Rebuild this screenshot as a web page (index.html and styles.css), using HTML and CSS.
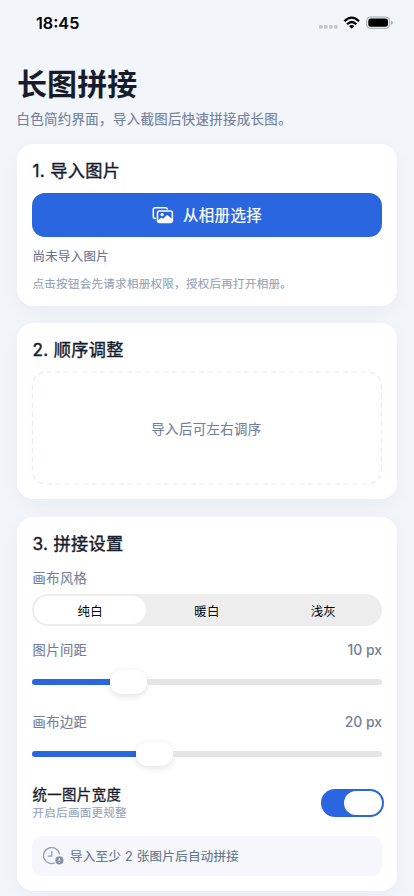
FILE: index.html
```html
<!DOCTYPE html>
<html lang="zh-CN">
<head>
<meta charset="utf-8">
<meta name="viewport" content="width=device-width, initial-scale=1">
<title>长图拼接</title>
<link rel="stylesheet" href="styles.css">
</head>
<body>
<div class="statusbar">
  <span class="time">18:45</span>
  <svg class="signals" width="76" height="16" viewBox="0 0 76 16">
    <g fill="#c2c5ca"><rect x="1" y="10" width="3.6" height="3.8" rx="1.2"/><rect x="6" y="10" width="3.6" height="3.8" rx="1.2"/><rect x="11" y="10" width="3.6" height="3.8" rx="1.2"/><rect x="16" y="10" width="3.6" height="3.8" rx="1.2"/></g>
    <g fill="none" stroke="#000" stroke-width="2.3"><path d="M26.4 6.2Q33.7 -.9 41 6.2"/><path d="M29.1 9.2Q33.7 4.7 38.3 9.2"/></g>
    <path d="M31 11.1Q33.7 8.7 36.4 11.1L33.7 13.8Z"/>
    <rect x="48.6" y="2" width="23" height="11.3" rx="3.6" fill="none" stroke="#a3a6aa"/>
    <rect x="50.3" y="3.6" width="19.7" height="8.1" rx="2.3"/>
    <path d="M73 5.7Q74.8 6.3 74.8 7.7T73 9.7Z" fill="#a3a6aa"/>
  </svg>
</div>
<main class="page">
  <h1 class="title">长图拼接</h1>
  <p class="subtitle">白色简约界面，导入截图后快速拼接成长图。</p>

  <section class="card import">
    <h2 class="heading">1. 导入图片</h2>
    <button class="pick">
      <svg width="22" height="18" viewBox="0 0 22 18">
        <path d="M4.2 12.6H3.3Q1.3 12.6 1.3 10.6V3.7Q1.3 1.7 3.3 1.7H13.4Q15.4 1.7 15.4 3.6" fill="none" stroke="#fff" stroke-width="1.5"/>
        <rect x="5.5" y="5" width="14.9" height="11.4" rx="2" fill="none" stroke="#fff" stroke-width="1.5"/>
        <circle cx="10.1" cy="8.6" r="1.6" fill="#fff"/>
        <path d="M5.7 14.4L8.7 11.9Q9.3 11.4 9.9 11.9L11 12.8L14.5 9.4Q15.2 8.8 15.9 9.4L20.2 13.1V16.1H5.7Z" fill="#fff"/>
      </svg>
      <span>从相册选择</span>
    </button>
    <p class="state">尚未导入图片</p>
    <p class="hint">点击按钮会先请求相册权限，授权后再打开相册。</p>
  </section>

  <section class="card order">
    <h2 class="heading">2. 顺序调整</h2>
    <div class="dropzone">
      <svg class="outline" width="351" height="114" viewBox="0 0 351 114"><rect x="1.4" y="1" width="349" height="112" rx="13.5"/></svg>
      <span>导入后可左右调序</span>
    </div>
  </section>

  <section class="card settings">
    <h2 class="heading">3. 拼接设置</h2>
    <p class="label">画布风格</p>
    <div class="segments"><span class="segment active">纯白</span><span class="segment">暖白</span><span class="segment last">浅灰</span></div>
    <div class="label row"><span>图片间距</span><span class="value">10 px</span></div>
    <div class="slider"><i class="fill gap"></i><i class="thumb"></i><i class="rest"></i></div>
    <div class="label row"><span>画布边距</span><span class="value">20 px</span></div>
    <div class="slider"><i class="fill margin"></i><i class="thumb"></i><i class="rest"></i></div>
    <div class="toggle-row">
      <div>
        <p class="toggle-title">统一图片宽度</p>
        <p class="toggle-sub">开启后画面更规整</p>
      </div>
      <div class="switch"><i></i></div>
    </div>
    <div class="notice">
      <svg width="21" height="18" viewBox="0 0 21 18">
        <path d="M16.5 7.4A8 8 0 1 0 11.8 15.9" fill="none" stroke="#94a3b8" stroke-width="1.4"/>
        <path d="M8.8 3.9V9.1H4.7" fill="none" stroke="#94a3b8" stroke-width="1.3"/>
        <circle cx="16.4" cy="13.4" r="4.1" fill="#8795ab"/>
        <path d="M16.4 11V13.8M16.4 14.8V15.9" stroke="#f5f7fd" stroke-width="1.2"/>
      </svg>
      <span>导入至少 2 张图片后自动拼接</span>
    </div>
  </section>
</main>
</body>
</html>
```
FILE: styles.css
```css
* { box-sizing: border-box; margin: 0; padding: 0; }
body {
  height: 896px;
  overflow: hidden;
  background: #f2f5fa;
  color: #161c2b;
  font-family: Inter, "Noto Sans CJK SC", sans-serif;
  -webkit-text-stroke: 0.12px currentColor;
}
.statusbar {
  display: flex;
  justify-content: space-between;
  align-items: center;
  height: 46px;
  padding: 0 20px 0 36px;
}
.time { font-size: 16.2px; font-weight: 600; color: #000; line-height: 20px; -webkit-text-stroke: 0; }
.signals { display: block; }
.page { padding: 18px 17px 0; }
.title { font-size: 30px; line-height: 40px; font-weight: 700; letter-spacing: 0.1px; -webkit-text-stroke: 0; }
.subtitle { height: 40px; padding-top: 5px; margin-left: -0.5px; font-size: 13.4px; line-height: 20px; letter-spacing: 0.38px; color: #71809a; }
.card {
  display: flex;
  flex-direction: column;
  background: #fff;
  border-radius: 16px;
  padding: 16px 15px 0;
  box-shadow: 0 6px 20px rgba(15, 23, 42, 0.045);
}
.import { height: 162px; }
.order { height: 176px; margin-top: 17px; }
.settings { height: 374px; margin-top: 18px; }
.heading { font-size: 17.2px; line-height: 22px; font-weight: 400; letter-spacing: 0.3px; padding-left: 0.5px; -webkit-text-stroke: 0.4px currentColor; }
.pick {
  display: flex;
  align-items: center;
  justify-content: center;
  gap: 9px;
  height: 44px;
  margin-top: 11px;
  border: 0;
  border-radius: 13px;
  background: #2966e0;
  color: #fff;
  font-family: inherit;
  font-size: 15.4px;
  font-weight: 400;
  letter-spacing: 0.4px;
  -webkit-text-stroke: 0.22px currentColor;
}
.pick span { padding-bottom: 2px; }
.state { margin-top: 10px; padding-left: 0.5px; font-size: 12.4px; line-height: 20px; letter-spacing: 0.35px; color: #64748b; }
.hint { margin-top: 7px; padding-left: 0.5px; font-size: 11.5px; line-height: 20px; letter-spacing: 0.3px; color: #94a3b8; }
.dropzone {
  position: relative;
  display: flex;
  align-items: center;
  justify-content: center;
  height: 114px;
  margin: 10px 0 0 -1px;
  color: #71809a;
  font-size: 13.4px;
  letter-spacing: 0.4px;
}
.outline { position: absolute; inset: 0; }
.outline rect { fill: none; stroke: #e6eaf2; stroke-width: 1.2; stroke-dasharray: 5 4; }
.label { margin-top: 13px; padding-left: 0.5px; font-size: 13.3px; line-height: 20px; letter-spacing: 0.4px; color: #71809a; }
.row { display: flex; justify-content: space-between; margin-top: 14px; }
.value { font-weight: 500; font-size: 13.9px; letter-spacing: 0; -webkit-text-stroke: 0; }
.segments { display: grid; grid-template-columns: repeat(3, 1fr); height: 32px; margin-top: 6px; padding: 2px; border-radius: 16px; background: #ededee; }
.segment { display: flex; align-items: center; justify-content: center; border-radius: 14px; color: #000; font-size: 12.4px; letter-spacing: 0.3px; -webkit-text-stroke: 0; padding-top: 1px; }
.active { background: #fff; margin-right: 3px; }
.last { padding-left: 2px; }
.slider { display: flex; align-items: center; height: 24px; margin-top: 10px; }
.fill, .rest { height: 6px; }
.fill { background: #2966e0; border-radius: 3px 0 0 3px; }
.gap { width: 78px; }
.margin { width: 104px; }
.rest { flex: 1; background: #e5e5e5; border-radius: 0 3px 3px 0; }
.thumb { width: 37px; height: 24px; border-radius: 12px; background: #fff; box-shadow: 0 2px 7px rgba(0, 0, 0, 0.12); }
.settings .slider + .label { margin-top: 18px; }
.toggle-row { display: flex; justify-content: space-between; margin-top: 19px; padding-left: 0.5px; }
.toggle-title { font-size: 14.4px; line-height: 20px; letter-spacing: 0.4px; font-weight: 400; -webkit-text-stroke: 0.3px currentColor; }
.toggle-sub { font-size: 11.5px; line-height: 16px; letter-spacing: 0.3px; color: #94a3b8; }
.switch { width: 63px; height: 28px; margin: 4px -2px 0 0; padding: 2px; border-radius: 14px; background: #2966e0; display: flex; justify-content: flex-end; }
.switch i { width: 38px; height: 24px; border-radius: 12px; background: #fff; }
.notice { display: flex; align-items: center; gap: 6px; height: 40px; margin-top: 15px; padding-left: 11px; border-radius: 10px; background: #f5f7fd; color: #64748b; font-size: 12.5px; letter-spacing: 0.3px; }
.notice span { padding-bottom: 1px; }
```
